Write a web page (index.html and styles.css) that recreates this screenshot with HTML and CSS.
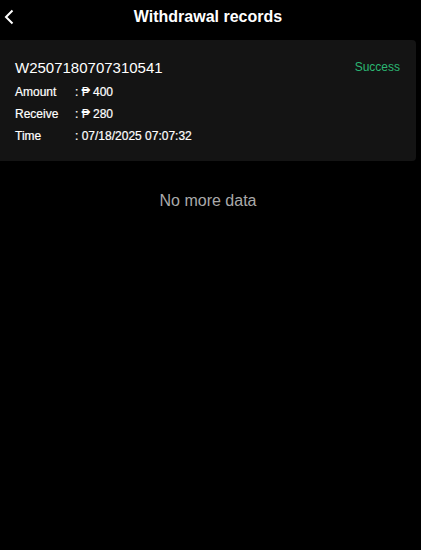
FILE: index.html
```html
<!DOCTYPE html>
<html>
<head>
<meta charset="utf-8">
<link rel="stylesheet" href="styles.css">
</head>
<body>
<div class="header">
  <svg class="back" width="12" height="16" viewBox="0 0 12 16"><path d="M9.5 1.5 L3 8 L9.5 14.5" fill="none" stroke="#fff" stroke-width="2"/></svg>
  <div class="title">Withdrawal records</div>
</div>
<div class="card">
  <div class="top">
    <div class="id">W2507180707310541</div>
    <div class="status">Success</div>
  </div>
  <div class="row"><span class="label">Amount</span><span class="value">: ₱ 400</span></div>
  <div class="row"><span class="label">Receive</span><span class="value">: ₱ 280</span></div>
  <div class="row"><span class="label">Time</span><span class="value">: 07/18/2025 07:07:32</span></div>
</div>
<div class="nomore">No more data</div>
</body>
</html>
```
FILE: styles.css
```css
html, body { margin: 0; padding: 0; background: #000; }
body { font-family: "Liberation Sans", Arial, sans-serif; color: #fff; width: 416px; height: 550px; }
.header { position: relative; height: 34px; display: flex; align-items: center; justify-content: center; }
.back { position: absolute; left: 3px; top: 9px; }
.title { font-size: 16px; font-weight: bold; }
.card { margin-top: 6px; width: 416px; background: #141414; border-radius: 0 4px 4px 0; padding: 17px 16px 14px 15px; box-sizing: border-box; }
.top { display: flex; justify-content: space-between; align-items: center; height: 20px; margin-bottom: 4px; }
.id { font-size: 15px; }
.status { font-size: 12px; color: #2bb673; }
.row { display: flex; font-size: 12px; height: 22px; align-items: center; -webkit-text-stroke: 0.2px #fff; }
.label { width: 60px; }
.nomore { text-align: center; color: #aaa; font-size: 16px; margin-top: 31px; }
```
